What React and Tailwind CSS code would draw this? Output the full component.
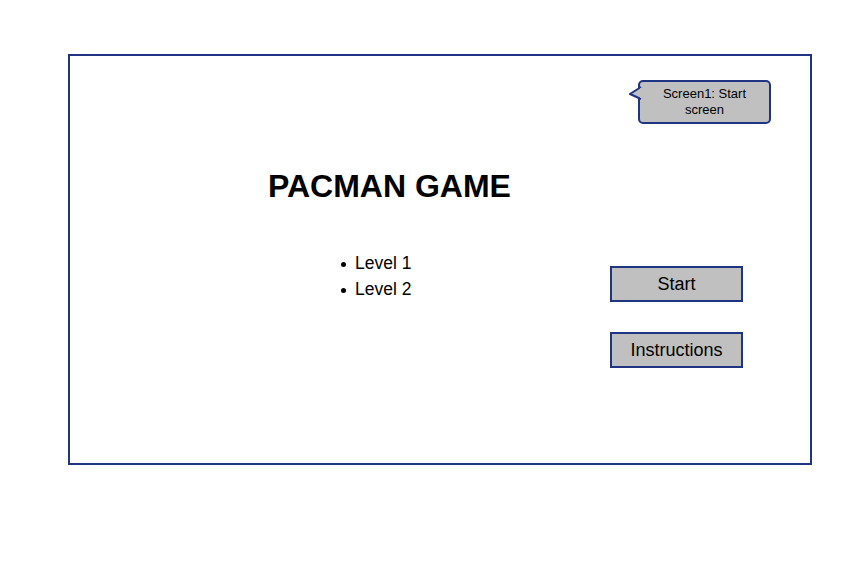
export default function App() {
  const navy = "border-[#1f3584]";
  return (
    <div
      className="w-[868px] h-[562px] bg-white overflow-hidden"
      style={{ fontFamily: '"Liberation Sans", Arial, sans-serif' }}
    >
      <div className={`ml-[68px] mt-[54px] w-[744px] h-[411px] border-2 ${navy} flex flex-col`}>
        {/* callout */}
        <div className="flex justify-end pt-[24px] pr-[39px]">
          <div className={`relative w-[133px] h-[44px] rounded-[5px] border-2 ${navy} bg-[#c0c0c0] flex items-center justify-center text-center text-[13px] leading-[16px] text-black`}>
            <svg
              className="absolute left-[-11px] top-[3px]"
              width="13"
              height="16"
              viewBox="0 0 13 16"
            >
              <path d="M12 2 L1 9 L12 14" fill="#c0c0c0" stroke="#1f3584" strokeWidth="2" strokeLinejoin="miter" />
              <rect x="11" y="3" width="3" height="10" fill="#c0c0c0" />
            </svg>
            <span>
              Screen1: Start
              <br />
              screen
            </span>
          </div>
        </div>
        {/* title */}
        <div className="ml-[198px] mt-[44px] text-[32px] leading-[36px] font-bold text-black whitespace-nowrap">
          PACMAN GAME
        </div>
        {/* list + buttons */}
        <div className="flex mt-[46px]">
          <div className="ml-[271px] flex flex-col text-[17.5px] leading-[26px] text-black">
            <div className="flex items-center">
              <span className="w-[5px] h-[5px] rounded-full bg-black mr-[9px] mt-[2px]" />
              <span>Level 1</span>
            </div>
            <div className="flex items-center">
              <span className="w-[5px] h-[5px] rounded-full bg-black mr-[9px] mt-[2px]" />
              <span>Level 2</span>
            </div>
          </div>
          <div className="ml-auto mr-[67px] mt-[16px] flex flex-col gap-[30px]">
            <div className={`w-[133px] h-[36px] border-2 ${navy} bg-[#c0c0c0] flex items-center justify-center text-[18px] text-black`}>
              Start
            </div>
            <div className={`w-[133px] h-[36px] border-2 ${navy} bg-[#c0c0c0] flex items-center justify-center text-[18px] text-black`}>
              Instructions
            </div>
          </div>
        </div>
      </div>
    </div>
  );
}
